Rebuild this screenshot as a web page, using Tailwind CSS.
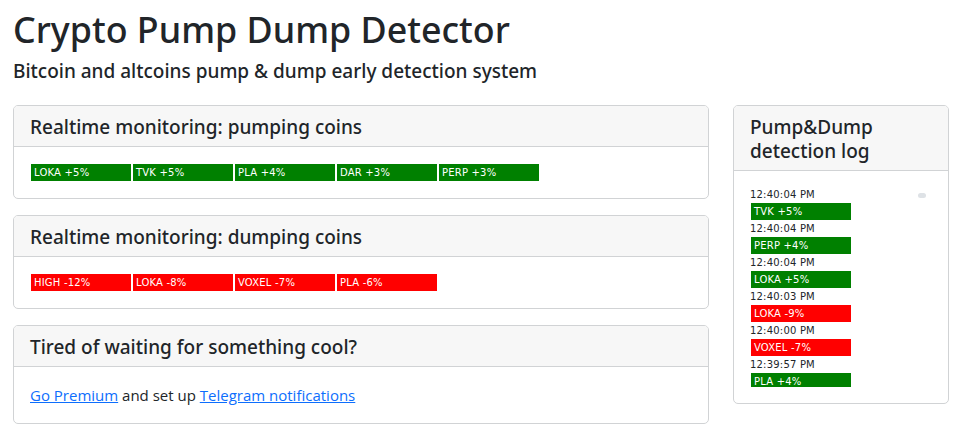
<!DOCTYPE html>
<html lang="en">
<head>
  <meta charset="UTF-8" />
  <title>Crypto Pump Dump Detector</title>
  <script src="https://cdn.jsdelivr.net/npm/@tailwindcss/browser@4"></script>
</head>
<body class="bg-white text-[#212529] font-['Open_Sans',sans-serif] overflow-hidden">
  <div class="px-[13px]">
    <h1 class="font-['Noto_Sans',sans-serif] text-[35.8px] leading-[48px] font-medium pt-[5px]">Crypto Pump Dump Detector</h1>
    <h5 class="font-['Noto_Sans',sans-serif] text-[19px] leading-[24px] font-medium pt-[1px] mt-[5px] mb-[22px]">Bitcoin and altcoins pump &amp; dump early detection system</h5>

    <div class="flex items-start gap-[24px]">
      <div class="w-[696px] flex flex-col gap-[16px]">
        <section class="border border-[#d1d3d5] rounded-[5px] overflow-hidden">
          <h5 class="font-['Noto_Sans',sans-serif] bg-[#f7f7f7] border-b border-[#d1d3d5] px-[16px] pt-[9px] pb-[7px] text-[19px] leading-[24px] font-medium">Realtime monitoring: pumping coins</h5>
          <div class="p-[16px] flex font-['DejaVu_Sans',sans-serif] text-[10px] leading-[17px] tracking-[0.2px] text-white">
            <div class="w-[100px] h-[17px] m-[1px] pl-[3px] bg-[#008000]">LOKA +5%</div>
            <div class="w-[100px] h-[17px] m-[1px] pl-[3px] bg-[#008000]">TVK +5%</div>
            <div class="w-[100px] h-[17px] m-[1px] pl-[3px] bg-[#008000]">PLA +4%</div>
            <div class="w-[100px] h-[17px] m-[1px] pl-[3px] bg-[#008000]">DAR +3%</div>
            <div class="w-[100px] h-[17px] m-[1px] pl-[3px] bg-[#008000]">PERP +3%</div>
          </div>
        </section>
        <section class="border border-[#d1d3d5] rounded-[5px] overflow-hidden">
          <h5 class="font-['Noto_Sans',sans-serif] bg-[#f7f7f7] border-b border-[#d1d3d5] px-[16px] pt-[9px] pb-[7px] text-[19px] leading-[24px] font-medium">Realtime monitoring: dumping coins</h5>
          <div class="p-[16px] flex font-['DejaVu_Sans',sans-serif] text-[10px] leading-[17px] tracking-[0.2px] text-white">
            <div class="w-[100px] h-[17px] m-[1px] pl-[3px] bg-[#ff0000]">HIGH -12%</div>
            <div class="w-[100px] h-[17px] m-[1px] pl-[3px] bg-[#ff0000]">LOKA -8%</div>
            <div class="w-[100px] h-[17px] m-[1px] pl-[3px] bg-[#ff0000]">VOXEL -7%</div>
            <div class="w-[100px] h-[17px] m-[1px] pl-[3px] bg-[#ff0000]">PLA -6%</div>
          </div>
        </section>
        <section class="border border-[#d1d3d5] rounded-[5px] overflow-hidden">
          <h5 class="font-['Noto_Sans',sans-serif] bg-[#f7f7f7] border-b border-[#d1d3d5] px-[16px] pt-[9px] pb-[7px] text-[19px] leading-[24px] font-medium">Tired of waiting for something cool?</h5>
          <div class="p-[16px] text-[15px] leading-[24px]">
            <a href="#" class="text-[#0d6efd] underline">Go Premium</a> and set up <a href="#" class="text-[#0d6efd] underline">Telegram notifications</a>
          </div>
        </section>
      </div>

      <section class="w-[216px] border border-[#d1d3d5] rounded-[5px] overflow-hidden">
        <h5 class="font-['Noto_Sans',sans-serif] bg-[#f7f7f7] border-b border-[#d1d3d5] px-[16px] pt-[9px] pb-[7px] text-[19px] leading-[24px] font-medium">Pump&amp;Dump detection log</h5>
        <div class="p-[16px]">
          <div class="relative h-[200px] overflow-hidden font-['DejaVu_Sans',sans-serif] text-[10px] tracking-[0.2px]">
            <span class="absolute right-[6px] top-[6px] w-[8px] h-[5px] rounded-full bg-[#dee2e6]"></span>
            <div class="h-[15px] leading-[15px]">12:40:04 PM</div>
            <div class="w-[100px] h-[17px] m-[1px] pl-[3px] leading-[17px] text-white bg-[#008000]">TVK +5%</div>
            <div class="h-[15px] leading-[15px]">12:40:04 PM</div>
            <div class="w-[100px] h-[17px] m-[1px] pl-[3px] leading-[17px] text-white bg-[#008000]">PERP +4%</div>
            <div class="h-[15px] leading-[15px]">12:40:04 PM</div>
            <div class="w-[100px] h-[17px] m-[1px] pl-[3px] leading-[17px] text-white bg-[#008000]">LOKA +5%</div>
            <div class="h-[15px] leading-[15px]">12:40:03 PM</div>
            <div class="w-[100px] h-[17px] m-[1px] pl-[3px] leading-[17px] text-white bg-[#ff0000]">LOKA -9%</div>
            <div class="h-[15px] leading-[15px]">12:40:00 PM</div>
            <div class="w-[100px] h-[17px] m-[1px] pl-[3px] leading-[17px] text-white bg-[#ff0000]">VOXEL -7%</div>
            <div class="h-[15px] leading-[15px]">12:39:57 PM</div>
            <div class="w-[100px] h-[17px] m-[1px] pl-[3px] leading-[17px] text-white bg-[#008000]">PLA +4%</div>
          </div>
        </div>
      </section>
    </div>
  </div>
</body>
</html>
